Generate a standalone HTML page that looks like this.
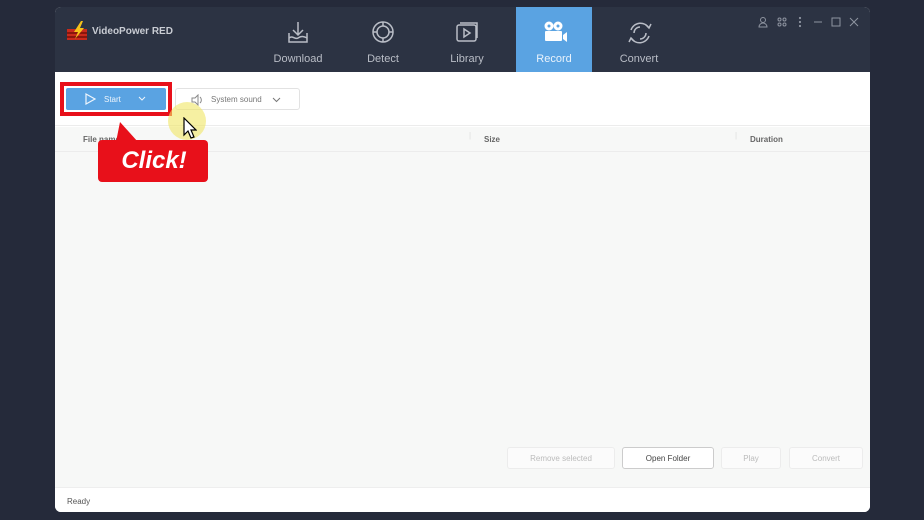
<!DOCTYPE html>
<html><head><meta charset="utf-8"><style>
*{margin:0;padding:0;box-sizing:border-box}
body{width:924px;height:520px;background:#252a3a;position:relative;overflow:hidden;font-family:"Liberation Sans",sans-serif}
.win{position:absolute;left:55px;top:7px;width:815px;height:505px;background:#fff;border-radius:6px;overflow:hidden}
.hdr{position:absolute;left:0;top:0;width:815px;height:65px;background:#2c3343}
.logo{position:absolute;left:12px;top:14px}
.brand{position:absolute;left:37px;top:19px;color:#c9ccd3;font-size:10px;font-weight:bold}
.tab{position:absolute;top:0;width:76px;height:65px;text-align:center;color:#b9bdc6;font-size:11px}
.tab svg{position:absolute;left:26px;top:13px}
.tab span{position:absolute;left:0;right:0;top:46px}
.rec{background:#5aa3e2;color:#eaf3fc}
.wc{position:absolute;top:9px}
.tb{position:absolute;top:65px;left:0;width:815px;height:54px;background:#fff;border-bottom:1px solid #ececec}
.start{position:absolute;left:11px;top:16px;width:100px;height:22px;background:#5aa3e2;border-radius:2px;color:#eef5fc;font-size:8px}
.sys{position:absolute;left:120px;top:16px;width:125px;height:22px;border:1px solid #e2e2e2;border-radius:3px;color:#777;font-size:8px}
.list{position:absolute;top:120px;left:0;width:815px;height:360px;background:#f7f8f7}
.th{position:absolute;top:0;left:0;width:815px;height:25px;border-bottom:1px solid #ececec;font-size:8px;color:#666;font-weight:bold}
.btn{position:absolute;top:320px;height:22px;border:1px solid #ececec;background:#fbfbfb;border-radius:3px;font-size:8px;color:#bbb;text-align:center;line-height:21px}
.status{position:absolute;top:480px;left:0;width:815px;height:25px;background:#fff;font-size:8px;color:#555;padding:9px 12px;border-top:1px solid #eee}
</style></head><body>
<div class="win">
 <div class="hdr">
  <svg class="logo" width="22" height="20" viewBox="0 0 22 20"><rect x="0" y="8" width="20" height="11" fill="#c82a1c"/><rect x="0" y="11" width="20" height="2" fill="#8a160c"/><rect x="0" y="15" width="20" height="2" fill="#8a160c"/><path d="M14 0 L7 11 L11 11 L8 18 L17 7 L13 7 L16 0Z" fill="#f6c21b"/></svg>
  <div class="brand">VideoPower RED</div>
  <div class="tab" style="left:205px"><svg width="24" height="26" viewBox="0 0 24 26" fill="none" stroke="#b9bdc6" stroke-width="1.5"><path d="M12 2v13M7 10l5 5 5-5"/><path d="M3 13v9h18v-9"/><path d="M3 18c4-3 6 2 9 0s5-2 9 0"/></svg><span>Download</span></div>
  <div class="tab" style="left:290px"><svg width="24" height="26" viewBox="0 0 24 26" fill="none" stroke="#b9bdc6" stroke-width="1.5"><circle cx="12" cy="12" r="10"/><circle cx="12" cy="12" r="6"/><path d="M12 2v4M12 18v4M2 12h4M18 12h4"/></svg><span>Detect</span></div>
  <div class="tab" style="left:374px"><svg width="24" height="26" viewBox="0 0 24 26" fill="none" stroke="#b9bdc6" stroke-width="1.5"><rect x="2" y="5" width="19" height="16" rx="2"/><path d="M5 3h17v15"/><path d="M9 9l6 4-6 4z"/></svg><span>Library</span></div>
  <div class="tab rec" style="left:461px"><svg width="26" height="26" viewBox="0 0 26 26" fill="#fff"><circle cx="7" cy="6" r="4.5"/><circle cx="16" cy="6" r="4.5"/><circle cx="7" cy="6" r="1.5" fill="#5aa3e2"/><circle cx="16" cy="6" r="1.5" fill="#5aa3e2"/><rect x="3" y="11" width="17" height="10" rx="1"/><path d="M21 15l4-3v10l-4-3z"/></svg><span>Record</span></div>
  <div class="tab" style="left:546px"><svg width="26" height="26" viewBox="0 0 26 26" fill="none" stroke="#b9bdc6" stroke-width="1.5"><path d="M4 10a10 10 0 0 1 18-2M22 16a10 10 0 0 1-18 2"/><path d="M19 5l3 3 2-4M7 21l-3-3-2 4"/><path d="M7 13a6 6 0 0 1 6-6M19 13a6 6 0 0 1-6 6"/></svg><span>Convert</span></div>
  <svg class="wc" style="left:702px" width="110" height="12" viewBox="0 0 110 12" fill="none" stroke="#8e94a0" stroke-width="1"><circle cx="6" cy="4" r="2.5"/><path d="M2 11a4 4 0 0 1 8 0z"/><rect x="21" y="2" width="3" height="3" rx="1.5"/><rect x="26" y="2" width="3" height="3" rx="1.5"/><rect x="21" y="7" width="3" height="3" rx="1.5"/><rect x="26" y="7" width="3" height="3" rx="1.5"/><circle cx="43" cy="2" r=".6"/><circle cx="43" cy="6" r=".6"/><circle cx="43" cy="10" r=".6"/><path d="M57 6h8"/><rect x="75" y="2" width="8" height="8"/><path d="M93 2l8 8M101 2l-8 8"/></svg>
 </div>
 <div class="tb">
  <div class="start"><svg style="position:absolute;left:18px;top:5px" width="12" height="12" viewBox="0 0 12 12" fill="none" stroke="#eef5fc" stroke-width="1.2"><path d="M2 1l9 5-9 5z"/></svg><span style="position:absolute;left:38px;top:7px">Start</span><svg style="position:absolute;left:72px;top:8px" width="8" height="6" viewBox="0 0 8 6" fill="none" stroke="#eef5fc"><path d="M1 1l3 3 3-3"/></svg></div>
  <div class="sys"><svg style="position:absolute;left:15px;top:5px" width="12" height="12" viewBox="0 0 12 12" fill="none" stroke="#888" stroke-width="1"><path d="M1 4h3l3-3v10l-3-3H1z"/><path d="M9 3a4 4 0 0 1 0 6"/></svg><span style="position:absolute;left:35px;top:6px">System sound</span><svg style="position:absolute;left:96px;top:8px" width="9" height="6" viewBox="0 0 9 6" fill="none" stroke="#777"><path d="M1 1l3.5 3.5L8 1"/></svg></div>
 </div>
 <div class="list">
  <div class="th"><span style="position:absolute;left:28px;top:8px">File name</span><span style="position:absolute;left:414px;top:4px;color:#ddd;font-weight:normal">|</span><span style="position:absolute;left:429px;top:8px">Size</span><span style="position:absolute;left:680px;top:4px;color:#ddd;font-weight:normal">|</span><span style="position:absolute;left:695px;top:8px">Duration</span></div>
  <div class="btn" style="left:452px;width:108px">Remove selected</div>
  <div class="btn" style="left:567px;width:92px;color:#444;border-color:#ccc;background:#fff">Open Folder</div>
  <div class="btn" style="left:666px;width:60px">Play</div>
  <div class="btn" style="left:734px;width:74px">Convert</div>
 </div>
 <div class="status">Ready</div>
</div>
<div style="position:absolute;left:60px;top:82px;width:112px;height:34px;border:4px solid #e8101a"></div>
<div style="position:absolute;left:168px;top:102px;width:38px;height:38px;border-radius:50%;background:rgba(240,230,100,.6)"></div>
<svg style="position:absolute;left:183px;top:117px" width="14" height="22" viewBox="0 0 14 22"><path d="M1 1v17l4-4 3 7 3-1-3-7h5z" fill="#fff" stroke="#000" stroke-width="1.2"/></svg>
<svg style="position:absolute;left:96px;top:120px" width="115" height="64" viewBox="0 0 115 64"><path d="M24 2l18 20H20z" fill="#e8101a"/><rect x="2" y="20" width="110" height="42" rx="4" fill="#e8101a"/></svg>
<div style="position:absolute;left:99px;top:140px;width:110px;height:42px;text-align:center;line-height:42px;color:#fff;font-size:24px;font-weight:bold;font-style:italic;font-family:'Liberation Sans',sans-serif">Click!</div>
</body></html>
